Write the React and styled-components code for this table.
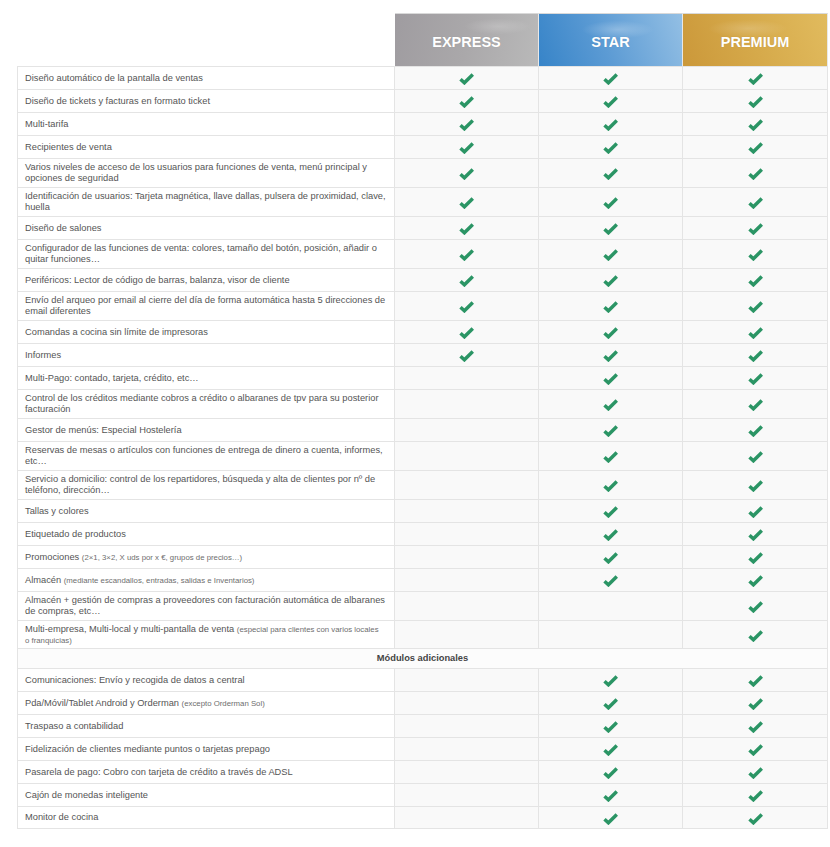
import React from "react";
import styled, { createGlobalStyle } from "styled-components";

const Global = createGlobalStyle`
  * { box-sizing: border-box; }
  html, body { margin: 0; padding: 0; background: #ffffff; }
  body { font-family: "Liberation Sans", Arial, sans-serif; }
`;

const Page = styled.div`
  padding: 13px 0 18px 17px;
`;

const Table = styled.div`
  width: 811px;
  display: flex;
  flex-direction: column;
`;

const Row = styled.div`
  display: grid;
  grid-template-columns: 378px 144px 144px 145px;
  &:last-child > div {
    border-bottom: 1px solid #e4e4e4;
  }
`;

const HeadBlank = styled.div`
  height: 53px;
`;

const plans = {
  express: `
    radial-gradient(ellipse 34px 8px at 72% 24%, rgba(255,255,255,0.18), rgba(255,255,255,0) 100%),
    linear-gradient(100deg, #9f9ca0 0%, #aaa8aa 50%, #b9b9b9 100%)`,
  star: `
    radial-gradient(ellipse 36px 9px at 55% 30%, rgba(255,255,255,0.25), rgba(255,255,255,0) 100%),
    linear-gradient(70deg, #3784c8 0%, #5c9bd4 45%, #93bfe4 100%)`,
  premium: `
    radial-gradient(ellipse 40px 9px at 45% 28%, rgba(255,255,255,0.18), rgba(255,255,255,0) 100%),
    linear-gradient(70deg, #cb983a 0%, #d6aa4b 50%, #e1bb5e 100%)`,
};

const HeadCell = styled.div`
  height: 53px;
  border-top: 1px solid #d9d9d9;
  border-right: 1px solid #e8e8e8;
  background: ${(p) => plans[p.$plan]};
  display: flex;
  align-items: center;
  justify-content: center;
  padding-top: 4px;
  color: #ffffff;
  font-family: "Liberation Sans", Arial, sans-serif;
  font-weight: bold;
  font-size: 14.5px;
  text-shadow: 0 0 1px rgba(0, 0, 0, 0.15);
`;

const LabelCell = styled.div`
  min-height: 23px;
  border-top: 1px solid #e4e4e4;
  border-left: 1px solid #e4e4e4;
  border-right: 1px solid #e4e4e4;
  background: #ffffff;
  padding: 3px 5px 3px 7px;
  display: flex;
  align-items: center;
  font-size: 9.3px;
  line-height: ${(p) => (p.$tight ? "10.5px" : "11px")};
  color: #555555;
`;

const Small = styled.span`
  font-size: 7.8px;
  line-height: 8px;
  color: #6e6e6e;
`;

const CheckCell = styled.div`
  border-top: 1px solid #e4e4e4;
  border-right: 1px solid #e4e4e4;
  background: #f9f9f9;
  display: flex;
  align-items: center;
  justify-content: center;
  padding-top: 2px;
`;

const SectionRow = styled.div`
  height: 20px;
  border-top: 1px solid #e4e4e4;
  border-left: 1px solid #e4e4e4;
  border-right: 1px solid #e4e4e4;
  background: #fcfcfc;
  display: flex;
  align-items: center;
  justify-content: center;
  font-size: 9.3px;
  line-height: 11px;
  font-weight: bold;
  color: #444444;
`;

const CheckSvg = styled.svg`
  width: 15px;
  height: 12px;
  display: block;
`;

const Check = () => (
  <CheckSvg viewBox="0 0 15 12">
    <polyline
      points="1.5,6.2 5.4,9.8 13.8,1.5"
      fill="none"
      stroke="#2b9565"
      strokeWidth="3.5"
      strokeLinejoin="miter"
    />
  </CheckSvg>
);

const main = [
  ["Diseño automático de la pantalla de ventas", 1, 1, 1],
  ["Diseño de tickets y facturas en formato ticket", 1, 1, 1],
  ["Multi-tarifa", 1, 1, 1],
  ["Recipientes de venta", 1, 1, 1],
  [
    <>Varios niveles de acceso de los usuarios para funciones de venta, menú principal y<br />opciones de seguridad</>,
    1, 1, 1,
  ],
  [
    <>Identificación de usuarios: Tarjeta magnética, llave dallas, pulsera de proximidad, clave,<br />huella</>,
    1, 1, 1,
  ],
  ["Diseño de salones", 1, 1, 1],
  [
    <>Configurador de las funciones de venta: colores, tamaño del botón, posición, añadir o<br />quitar funciones…</>,
    1, 1, 1,
  ],
  ["Periféricos: Lector de código de barras, balanza, visor de cliente", 1, 1, 1],
  [
    <>Envío del arqueo por email al cierre del día de forma automática hasta 5 direcciones de<br />email diferentes</>,
    1, 1, 1,
  ],
  ["Comandas a cocina sin límite de impresoras", 1, 1, 1],
  ["Informes", 1, 1, 1],
  ["Multi-Pago: contado, tarjeta, crédito, etc…", 0, 1, 1],
  [
    <>Control de los créditos mediante cobros a crédito o albaranes de tpv para su posterior<br />facturación</>,
    0, 1, 1,
  ],
  ["Gestor de menús: Especial Hostelería", 0, 1, 1],
  [
    <>Reservas de mesas o artículos con funciones de entrega de dinero a cuenta, informes,<br />etc…</>,
    0, 1, 1,
  ],
  [
    <>Servicio a domicilio: control de los repartidores, búsqueda y alta de clientes por nº de<br />teléfono, dirección…</>,
    0, 1, 1,
  ],
  ["Tallas y colores", 0, 1, 1],
  ["Etiquetado de productos", 0, 1, 1],
  [<>Promociones <Small>(2×1, 3×2, X uds por x €, grupos de precios…)</Small></>, 0, 1, 1],
  [<>Almacén <Small>(mediante escandallos, entradas, salidas e Inventarios)</Small></>, 0, 1, 1],
  [
    <>Almacén + gestión de compras a proveedores con facturación automática de albaranes<br />de compras, etc…</>,
    0, 0, 1,
  ],
  [
    <>Multi-empresa, Multi-local y multi-pantalla de venta <Small>(especial para clientes con varios locales<br />o franquicias)</Small></>,
    0, 0, 1, true,
  ],
];

const extra = [
  ["Comunicaciones: Envío y recogida de datos a central", 0, 1, 1],
  [<>Pda/Móvil/Tablet Android y Orderman <Small>(excepto Orderman Sol)</Small></>, 0, 1, 1],
  ["Traspaso a contabilidad", 0, 1, 1],
  ["Fidelización de clientes mediante puntos o tarjetas prepago", 0, 1, 1],
  ["Pasarela de pago: Cobro con tarjeta de crédito a través de ADSL", 0, 1, 1],
  ["Cajón de monedas inteligente", 0, 1, 1],
  ["Monitor de cocina", 0, 1, 1],
];

const FeatureRow = ({ row }) => {
  const [label, e, s, p, tight] = row;
  return (
    <Row>
      <LabelCell $tight={tight}>
        <span>{label}</span>
      </LabelCell>
      <CheckCell>{e ? <Check /> : null}</CheckCell>
      <CheckCell>{s ? <Check /> : null}</CheckCell>
      <CheckCell>{p ? <Check /> : null}</CheckCell>
    </Row>
  );
};

export default function App() {
  return (
    <>
      <Global />
      <Page>
        <Table>
          <Row>
            <HeadBlank />
            <HeadCell $plan="express">EXPRESS</HeadCell>
            <HeadCell $plan="star">STAR</HeadCell>
            <HeadCell $plan="premium">PREMIUM</HeadCell>
          </Row>
          {main.map((r, i) => (
            <FeatureRow key={"m" + i} row={r} />
          ))}
          <SectionRow>Módulos adicionales</SectionRow>
          {extra.map((r, i) => (
            <FeatureRow key={"x" + i} row={r} />
          ))}
        </Table>
      </Page>
    </>
  );
}
